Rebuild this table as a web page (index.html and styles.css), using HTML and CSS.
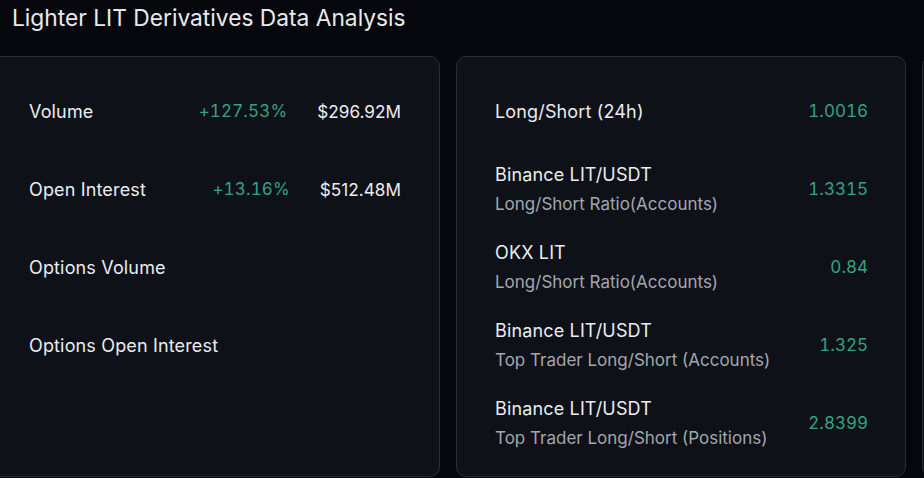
FILE: index.html
```html
<!DOCTYPE html>
<html>
<head>
<meta charset="utf-8">
<link rel="stylesheet" href="styles.css">
</head>
<body>
<h1 class="title">Lighter LIT Derivatives Data Analysis</h1>
<div class="cards">
  <section class="card">
    <div class="row">
      <div class="label">Volume</div>
      <div class="pct">+127.53%</div>
      <div class="amt">$296.92M</div>
    </div>
    <div class="row">
      <div class="label">Open Interest</div>
      <div class="pct">+13.16%</div>
      <div class="amt">$512.48M</div>
    </div>
    <div class="row">
      <div class="label">Options Volume</div>
    </div>
    <div class="row">
      <div class="label">Options Open Interest</div>
    </div>
  </section>
  <section class="card right">
    <div class="row">
      <div class="label">Long/Short (24h)</div>
      <div class="ratio">1.0016</div>
    </div>
    <div class="row">
      <div class="label"><div>Binance LIT/USDT</div><div class="sub">Long/Short Ratio(Accounts)</div></div>
      <div class="ratio">1.3315</div>
    </div>
    <div class="row">
      <div class="label"><div>OKX LIT</div><div class="sub">Long/Short Ratio(Accounts)</div></div>
      <div class="ratio">0.84</div>
    </div>
    <div class="row">
      <div class="label"><div>Binance LIT/USDT</div><div class="sub">Top Trader Long/Short (Accounts)</div></div>
      <div class="ratio">1.325</div>
    </div>
    <div class="row">
      <div class="label"><div>Binance LIT/USDT</div><div class="sub">Top Trader Long/Short (Positions)</div></div>
      <div class="ratio">2.8399</div>
    </div>
  </section>
  <section class="card"></section>
</div>
</body>
</html>
```
FILE: styles.css
```css
html, body {
  margin: 0;
  padding: 0;
  background: #05070c;
  overflow: hidden;
  height: 478px;
}
body {
  font-family: Inter, "Noto Sans", sans-serif;
  color: #eaecef;
}
.title {
  margin: 0;
  padding: 4px 0 0 12px;
  height: 56px;
  box-sizing: border-box;
  font-size: 22.75px;
  font-weight: 400;
  line-height: 28px;
  color: #e9eaec;
}
.cards {
  display: flex;
  gap: 16px;
  margin-left: -10px;
}
.card {
  flex: 0 0 450px;
  height: 421px;
  box-sizing: border-box;
  background: #0e1118;
  border: 1px solid #2a2d36;
  border-radius: 10px;
  padding: 15px 38px 0 38px;
}
.card.right {
  padding-right: 37px;
}
.row {
  height: 78px;
  display: flex;
  align-items: center;
  line-height: 29px;
}
.label {
  flex: 1;
  color: #eaecef;
  font-size: 18px;
  letter-spacing: 0.15px;
}
.sub {
  color: #a3a7ae;
  font-size: 17px;
  letter-spacing: 0;
  margin-top: 1px;
}
.pct {
  color: #33a383;
  margin-right: 30px;
  font-size: 17px;
  letter-spacing: 0.15px;
  font-variant-numeric: tabular-nums;
}
.amt {
  color: #eaecef;
  font-size: 17.2px;
}
.ratio {
  color: #33a383;
  font-size: 17px;
  font-variant-numeric: tabular-nums;
}
```
